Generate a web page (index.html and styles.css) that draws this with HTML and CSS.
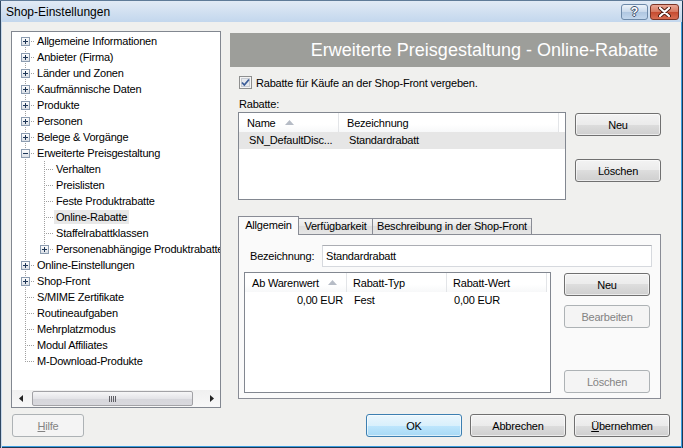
FILE: index.html
```html
<!DOCTYPE html>
<html lang="de">
  <head>
    <meta charset="UTF-8" />
    <title>Shop-Einstellungen</title>
    <link rel="stylesheet" href="styles.css">
  </head>
  <body>
    <div class="window">
      <div class="titlebar">
        <span class="title">Shop-Einstellungen</span>
        <div class="caption-buttons">
          <span class="cap help">?</span>
          <span class="cap close">
            <svg width="13" height="10" viewBox="0 0 13 10">
              <path d="M2 1 L11 9 M11 1 L2 9" stroke="#4a1a10" stroke-width="4" stroke-linecap="round"/>
              <path d="M2 1 L11 9 M11 1 L2 9" stroke="#fff" stroke-width="2.2" stroke-linecap="round"/>
            </svg>
          </span>
        </div>
      </div>

      <div class="main">
        <div class="tree">
          <ul class="tree-list">
            <li class="node"><span class="conn first"><svg class="exp"><use href="#plus"/></svg></span><span class="label">Allgemeine Informationen</span></li>
            <li class="node"><span class="conn"><svg class="exp"><use href="#plus"/></svg></span><span class="label">Anbieter (Firma)</span></li>
            <li class="node"><span class="conn"><svg class="exp"><use href="#plus"/></svg></span><span class="label">Länder und Zonen</span></li>
            <li class="node"><span class="conn"><svg class="exp"><use href="#plus"/></svg></span><span class="label">Kaufmännische Daten</span></li>
            <li class="node"><span class="conn"><svg class="exp"><use href="#plus"/></svg></span><span class="label">Produkte</span></li>
            <li class="node"><span class="conn"><svg class="exp"><use href="#plus"/></svg></span><span class="label">Personen</span></li>
            <li class="node"><span class="conn"><svg class="exp"><use href="#plus"/></svg></span><span class="label">Belege &amp; Vorgänge</span></li>
            <li class="node"><span class="conn"><svg class="exp"><use href="#minus"/></svg></span><span class="label">Erweiterte Preisgestaltung</span></li>
            <li class="node"><span class="indent"></span><span class="conn"></span><span class="label">Verhalten</span></li>
            <li class="node"><span class="indent"></span><span class="conn"></span><span class="label">Preislisten</span></li>
            <li class="node"><span class="indent"></span><span class="conn"></span><span class="label">Feste Produktrabatte</span></li>
            <li class="node"><span class="indent"></span><span class="conn"></span><span class="label sel">Online-Rabatte</span></li>
            <li class="node"><span class="indent"></span><span class="conn"></span><span class="label">Staffelrabattklassen</span></li>
            <li class="node"><span class="indent"></span><span class="conn last"><svg class="exp"><use href="#plus"/></svg></span><span class="label">Personenabhängige Produktrabatte</span></li>
            <li class="node"><span class="conn"><svg class="exp"><use href="#plus"/></svg></span><span class="label">Online-Einstellungen</span></li>
            <li class="node"><span class="conn"><svg class="exp"><use href="#plus"/></svg></span><span class="label">Shop-Front</span></li>
            <li class="node"><span class="conn"></span><span class="label">S/MIME Zertifikate</span></li>
            <li class="node"><span class="conn"></span><span class="label">Routineaufgaben</span></li>
            <li class="node"><span class="conn"></span><span class="label">Mehrplatzmodus</span></li>
            <li class="node"><span class="conn"></span><span class="label">Modul Affiliates</span></li>
            <li class="node"><span class="conn last"></span><span class="label">M-Download-Produkte</span></li>
          </ul>
          <div class="hscroll">
            <span class="sb-arrow"><svg width="4" height="7"><path d="M4 0 V7 L0 3.5 Z" fill="#222"/></svg></span>
            <div class="sb-track">
              <div class="sb-thumb"><span class="grip"></span></div>
            </div>
            <span class="sb-arrow"><svg width="4" height="7"><path d="M0 0 V7 L4 3.5 Z" fill="#222"/></svg></span>
          </div>
        </div>

        <div class="page">
          <div class="banner">Erweiterte Preisgestaltung - Online-Rabatte</div>

          <label class="check-row">
            <svg class="checkbox" width="13" height="13" viewBox="0 0 13 13">
              <rect x="0.5" y="0.5" width="12" height="12" fill="#f4f4f4" stroke="#8e8f8f"/>
              <rect x="2.5" y="2.5" width="8" height="8" fill="#e6e9ee" stroke="#c6cbd3"/>
              <path d="M3 6.5 L5.3 9 L10 3.5" fill="none" stroke="#3b5d98" stroke-width="1.8"/>
            </svg>
            <span>Rabatte für Käufe an der Shop-Front vergeben.</span>
          </label>

          <div class="group-label">Rabatte:</div>
          <div class="list-row">
            <div class="listview discounts">
              <div class="lv-head">
                <span class="hcol" style="width:100px">Name<svg class="sort" width="9" height="5"><path d="M0 5 L4.5 0 L9 5 Z" fill="#b6bcc6"/></svg></span>
                <span class="hcol" style="width:220px">Bezeichnung</span>
              </div>
              <div class="lv-row sel">
                <span class="cell" style="width:100px">SN_DefaultDisc...</span>
                <span class="cell" style="width:220px">Standardrabatt</span>
              </div>
            </div>
            <div class="btn-col">
              <button class="btn">Neu</button>
              <button class="btn">Löschen</button>
            </div>
          </div>

          <div class="tabs">
            <div class="tab-strip">
              <span class="tab active" style="width:61px">Allgemein</span>
              <span class="tab" style="width:74px">Verfügbarkeit</span>
              <span class="tab" style="width:159px">Beschreibung in der Shop-Front</span>
            </div>
            <div class="tab-panel">
              <div class="field-row">
                <span class="field-label">Bezeichnung:</span>
                <div class="textbox">Standardrabatt</div>
              </div>
              <div class="panel-body">
                <div class="listview steps">
                  <div class="lv-head">
                    <span class="hcol" style="width:102px">Ab Warenwert<svg class="sort" width="9" height="5"><path d="M0 5 L4.5 0 L9 5 Z" fill="#b6bcc6"/></svg></span>
                    <span class="hcol" style="width:100px">Rabatt-Typ</span>
                    <span class="hcol" style="width:100px">Rabatt-Wert</span>
                  </div>
                  <div class="lv-row">
                    <span class="cell num" style="width:102px">0,00 EUR</span>
                    <span class="cell" style="width:100px">Fest</span>
                    <span class="cell" style="width:100px">0,00 EUR</span>
                  </div>
                </div>
                <div class="btn-col inner">
                  <button class="btn">Neu</button>
                  <button class="btn" disabled>Bearbeiten</button>
                  <button class="btn bottom" disabled>Löschen</button>
                </div>
              </div>
            </div>
          </div>
        </div>
      </div>

      <div class="footer">
        <button class="btn help-btn" disabled><u>H</u>ilfe</button>
        <button class="btn default">OK</button>
        <button class="btn">Abbrechen</button>
        <button class="btn"><u>Ü</u>bernehmen</button>
      </div>
    </div>

    <!-- expander glyphs for the tree -->
    <svg width="0" height="0" style="position:absolute">
      <defs>
        <linearGradient id="expfill" x1="0" y1="0" x2="0" y2="1">
          <stop offset="0" stop-color="#ffffff"/>
          <stop offset="1" stop-color="#d8dde4"/>
        </linearGradient>
        <g id="box">
          <rect x="0.5" y="0.5" width="8" height="8" fill="url(#expfill)" stroke="#8c9cb0"/>
        </g>
        <g id="plus">
          <use href="#box"/>
          <path d="M2 4.5 H7 M4.5 2 V7" stroke="#1e3656"/>
        </g>
        <g id="minus">
          <use href="#box"/>
          <path d="M2 4.5 H7" stroke="#1e3656"/>
        </g>
      </defs>
    </svg>
  </body>
</html>
```

FILE: styles.css
```css
* {
  box-sizing: border-box;
}

body {
  margin: 0;
  font-family: "Liberation Sans", Arial, sans-serif;
  font-size: 11px;
  letter-spacing: -0.2px;
  color: #000;
}

.window {
  width: 683px;
  height: 448px;
  background: #f0f0ee;
  display: flex;
  flex-direction: column;
  box-shadow: inset 1px 0 #2f4863, inset 2px 0 #c8d9eb,
    inset -1px 0 #1d3853, inset -2px 0 #3d9de0,
    inset 0 -1px #1d3853, inset 0 -2px #3d9de0;
}

/* title bar */
.titlebar {
  height: 22px;
  flex: none;
  display: flex;
  align-items: center;
  padding: 0 4px 0 6px;
  background: linear-gradient(#e1eaf5, #c3d7ed);
  border-top: 1px solid #5f7b98;
  box-shadow: inset 1px 0 #2f4863, inset -1px 0 #1d3853;
  font-size: 12px;
  letter-spacing: 0;
}

.caption-buttons {
  margin-left: auto;
  display: flex;
  gap: 2px;
}

.cap {
  height: 16px;
  border-radius: 3px;
  display: flex;
  align-items: center;
  justify-content: center;
}

.cap.help {
  width: 27px;
  border: 1px solid #6d89a8;
  background: linear-gradient(#edf3f9, #c7d8eb 50%, #afc6e0 50%, #c2d7ed);
  color: #fff;
  font-weight: bold;
  font-size: 12px;
  text-shadow: 1px 0 #3b4f6b, -1px 0 #3b4f6b, 0 1px #3b4f6b, 0 -1px #3b4f6b;
}

.cap.close {
  width: 29px;
  border: 1px solid #7a3426;
  background: linear-gradient(#eaa796, #d6765e 50%, #c54a2f 50%, #d86d52);
}

/* main area */
.main {
  display: flex;
  gap: 9px;
  padding: 9px 13px 0 11px;
}

.tree {
  width: 210px;
  height: 377px;
  border: 1px solid #828790;
  background: #fff;
  display: flex;
  flex-direction: column;
}

.tree-list {
  list-style: none;
  margin: 0;
  padding: 1px 0 0 4px;
  flex: 1;
  overflow: hidden;
}

.node {
  display: flex;
  align-items: center;
  height: 16px;
  white-space: nowrap;
}

.indent,
.conn {
  width: 19px;
  height: 16px;
  flex: none;
}

.indent {
  background: repeating-linear-gradient(to bottom, #a0a0a0 0 1px, transparent 1px 2px) 9px 0 / 1px 16px no-repeat;
}

.conn {
  background:
    repeating-linear-gradient(to right, #a0a0a0 0 1px, transparent 1px 2px) 11px 8px / 8px 1px no-repeat,
    repeating-linear-gradient(to bottom, #a0a0a0 0 1px, transparent 1px 2px) 9px 0 / 1px 16px no-repeat;
}

.conn.first {
  background:
    repeating-linear-gradient(to right, #a0a0a0 0 1px, transparent 1px 2px) 11px 8px / 8px 1px no-repeat,
    repeating-linear-gradient(to bottom, #a0a0a0 0 1px, transparent 1px 2px) 9px 8px / 1px 8px no-repeat;
}

.conn.last {
  background:
    repeating-linear-gradient(to right, #a0a0a0 0 1px, transparent 1px 2px) 11px 8px / 8px 1px no-repeat,
    repeating-linear-gradient(to bottom, #a0a0a0 0 1px, transparent 1px 2px) 9px 0 / 1px 9px no-repeat;
}

.exp {
  display: block;
  width: 9px;
  height: 9px;
  margin: 4px 0 0 5px;
}

.label {
  padding: 0 2px;
  height: 14px;
  line-height: 14px;
}

.label.sel {
  background: #e8e8e8;
}

/* horizontal scrollbar of the tree */
.hscroll {
  height: 17px;
  flex: none;
  display: flex;
  background: linear-gradient(#f0f0f0, #f8f8f8);
}

.sb-arrow {
  width: 17px;
  display: flex;
  align-items: center;
  justify-content: center;
}

.sb-track {
  flex: 1;
  padding: 1px 0 1px 3px;
}

.sb-thumb {
  width: 161px;
  height: 15px;
  border: 1px solid #a2a2a6;
  border-radius: 2px;
  background: linear-gradient(#f6f6f7, #e4e4e8 50%, #d6d6db 50%, #d9d9de);
  display: flex;
  align-items: center;
  justify-content: center;
}

.grip {
  width: 7px;
  height: 6px;
  background: repeating-linear-gradient(to right, #606066 0 1px, transparent 1px 2px);
}

/* right hand page */
.page {
  width: 440px;
  display: flex;
  flex-direction: column;
}

.banner {
  margin-top: 2px;
  height: 34px;
  line-height: 34px;
  background: #9d9e9a;
  color: #fff;
  font-size: 18px;
  letter-spacing: 0;
  text-align: right;
  padding-right: 12px;
}

.check-row {
  display: flex;
  align-items: center;
  gap: 4px;
  height: 13px;
  margin: 9px 0 0 9px;
}

.checkbox {
  flex: none;
}

.group-label {
  margin: 9px 0 0 9px;
  line-height: 12px;
}

.list-row {
  display: flex;
  gap: 9px;
  margin: 2px 0 0 8px;
}

.listview {
  border: 1px solid #828790;
  background: #fff;
}

.listview.discounts {
  width: 328px;
  height: 88px;
}

.lv-head {
  display: flex;
  height: 19px;
}

.hcol {
  display: flex;
  align-items: center;
  border-right: 1px solid #e3e5e8;
  padding-left: 8px;
  background: linear-gradient(#ffffff, #ffffff 60%, #f7f8f9);
}

.sort {
  margin-left: 9px;
}

.lv-row {
  display: flex;
  height: 17px;
  line-height: 17px;
}

.lv-row.sel {
  background: #e6e6e6;
}

.cell {
  padding-left: 10px;
}

.btn-col {
  width: 86px;
  display: flex;
  flex-direction: column;
  gap: 23px;
  padding-top: 1px;
}

.btn {
  height: 23px;
  padding: 0;
  border: 1px solid #707070;
  border-radius: 3px;
  background: linear-gradient(#f3f3f3, #ebebeb 50%, #dddddd 50%, #cfcfcf);
  box-shadow: inset 0 0 0 1px rgba(255, 255, 255, 0.6);
  font: inherit;
  letter-spacing: inherit;
  color: #000;
}

.btn:disabled {
  border-color: #adb2b5;
  background: #f4f4f4;
  box-shadow: none;
  color: #838383;
}

.btn.default {
  border-color: #3c7fb1;
  background: linear-gradient(#eaf6fd, #d9f0fc 50%, #bee6fd 50%, #a7d9f5);
}

/* tab control */
.tabs {
  width: 423px;
  margin: 16px 0 0 8px;
}

.tab-strip {
  display: flex;
  align-items: flex-end;
  height: 18px;
}

.tab {
  height: 16px;
  line-height: 15px;
  text-align: center;
  white-space: nowrap;
  border: 1px solid #898c95;
  border-bottom: none;
  border-left: none;
  background: linear-gradient(#f4f4f4, #e8e8e8 50%, #dedede 50%, #e6e6e6);
}

.tab.active {
  position: relative;
  z-index: 1;
  height: 19px;
  margin-bottom: -1px;
  border-left: 1px solid #898c95;
  background: #fafafa;
  line-height: 17px;
}

.tab-panel {
  height: 165px;
  border: 1px solid #898c95;
  background: #fafafa;
}

.field-row {
  display: flex;
  align-items: center;
  margin: 10px 0 0 11px;
}

.field-label {
  width: 72px;
}

.textbox {
  width: 330px;
  height: 22px;
  line-height: 20px;
  padding-left: 3px;
  background: #fff;
  border: 1px solid #d6d9de;
  border-top-color: #abadb3;
}

.panel-body {
  display: flex;
  gap: 13px;
  margin: 5px 0 0 5px;
}

.listview.steps {
  width: 307px;
  height: 121px;
}

.listview.steps .hcol {
  padding-left: 6px;
}

.listview.steps .hcol:first-child {
  padding-left: 7px;
}

.listview.steps .cell {
  padding-left: 7px;
}

.listview.steps .cell.num {
  text-align: right;
  padding: 0 4px 0 0;
}

.btn-col.inner {
  gap: 9px;
}

.btn-col .bottom {
  margin-top: auto;
}

/* dialog buttons */
.footer {
  display: flex;
  gap: 8px;
  padding: 6px 13px 0 12px;
}

.footer .btn {
  width: 96px;
}

.footer .help-btn {
  width: 72px;
  margin-right: auto;
}
```
